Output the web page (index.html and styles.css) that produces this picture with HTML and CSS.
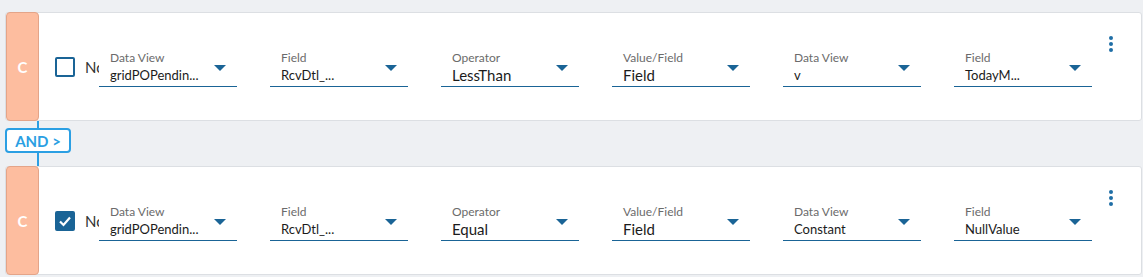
FILE: index.html
```html
<!DOCTYPE html>
<html lang="en">
<head>
    <meta charset="UTF-8">
    <title>Rule Builder</title>
    <link rel="stylesheet" href="styles.css">
</head>
<body>
    <div class="rule">
        <div class="rule-tag">C</div>
        <div class="rule-body">
            <span class="check"></span>
            <span class="not-label">Not</span>
            <div class="field"><span class="field-label">Data View</span><span class="field-value">gridPOPendin...</span><i class="caret"></i></div>
            <div class="field"><span class="field-label">Field</span><span class="field-value">RcvDtl_...</span><i class="caret"></i></div>
            <div class="field"><span class="field-label">Operator</span><span class="field-value big">LessThan</span><i class="caret"></i></div>
            <div class="field"><span class="field-label">Value/Field</span><span class="field-value big">Field</span><i class="caret"></i></div>
            <div class="field"><span class="field-label">Data View</span><span class="field-value">v</span><i class="caret"></i></div>
            <div class="field"><span class="field-label">Field</span><span class="field-value">TodayM...</span><i class="caret"></i></div>
        </div>
        <div class="menu"><b></b><b></b><b></b></div>
    </div>

    <div class="connector">
        <span class="line top"></span>
        <button class="and-btn">AND &gt;</button>
        <span class="line bottom"></span>
    </div>

    <div class="rule">
        <div class="rule-tag">C</div>
        <div class="rule-body">
            <span class="check checked">
                <svg width="14" height="12" viewBox="0 0 14 12"><path d="M2 6.5 L5.5 10 L12 2.5" fill="none" stroke="#fff" stroke-width="2.2"/></svg>
            </span>
            <span class="not-label">Not</span>
            <div class="field"><span class="field-label">Data View</span><span class="field-value">gridPOPendin...</span><i class="caret"></i></div>
            <div class="field"><span class="field-label">Field</span><span class="field-value">RcvDtl_...</span><i class="caret"></i></div>
            <div class="field"><span class="field-label">Operator</span><span class="field-value big">Equal</span><i class="caret"></i></div>
            <div class="field"><span class="field-label">Value/Field</span><span class="field-value big">Field</span><i class="caret"></i></div>
            <div class="field"><span class="field-label">Data View</span><span class="field-value">Constant</span><i class="caret"></i></div>
            <div class="field"><span class="field-label">Field</span><span class="field-value">NullValue</span><i class="caret"></i></div>
        </div>
        <div class="menu"><b></b><b></b><b></b></div>
    </div>
</body>
</html>
```

FILE: styles.css
```css
body {
    margin: 0;
    padding: 12px 2px 0 5px;
    background: #eef0f3;
    font-family: Lato, "Liberation Sans", sans-serif;
    color: #1b1b1b;
}
.rule {
    display: flex;
    box-sizing: border-box;
    width: 1137px;
    height: 109px;
    background: #fff;
    border: 1px solid #dcdfe3;
    border-radius: 3px;
}
.rule-tag {
    flex-shrink: 0;
    box-sizing: border-box;
    width: 33px;
    margin: -1px 0;
    background: #fdbd9f;
    border: 1px solid #e4a488;
    border-radius: 4px;
    color: #fff;
    font-weight: bold;
    font-size: 15px;
    display: flex;
    align-items: center;
    justify-content: center;
}
.rule-body {
    flex-shrink: 0;
    display: flex;
    align-items: center;
    padding-left: 16px;
}
.check {
    flex-shrink: 0;
    box-sizing: border-box;
    width: 20px;
    height: 20px;
    border: 2px solid #1a6496;
    border-radius: 2px;
    display: flex;
    align-items: center;
    justify-content: center;
}
.check.checked {
    background: #1a6496;
}
.not-label {
    flex-shrink: 0;
    width: 14px;
    margin-left: 10px;
    overflow: hidden;
    white-space: nowrap;
    font-size: 15px;
    color: #333;
}
.field {
    flex-shrink: 0;
    position: relative;
    box-sizing: border-box;
    width: 138px;
    margin-right: 33px;
    margin-top: 4px;
    padding-left: 11px;
    border-bottom: 1px solid #1a6496;
    display: flex;
    flex-direction: column;
}
.field:last-child {
    margin-right: 0;
}
.field-label {
    font-size: 12px;
    line-height: 14px;
    color: #6b6b6b;
}
.field-value {
    font-size: 13px;
    line-height: 21px;
    white-space: nowrap;
}
.field-value.big {
    font-size: 15px;
}
.caret {
    position: absolute;
    right: 11px;
    top: 14px;
    border-left: 6px solid transparent;
    border-right: 6px solid transparent;
    border-top: 6px solid #1a6496;
}
.menu {
    margin-left: auto;
    margin-right: 28px;
    padding-top: 23px;
    display: flex;
    flex-direction: column;
    gap: 2px;
}
.menu b {
    width: 4px;
    height: 4px;
    border-radius: 50%;
    background: #1f6ea6;
}
.connector {
    width: 66px;
    display: flex;
    flex-direction: column;
    align-items: center;
}
.line {
    width: 2px;
    background: #2b9fe3;
}
.line.top {
    height: 7px;
}
.line.bottom {
    height: 13px;
}
.and-btn {
    box-sizing: border-box;
    width: 66px;
    height: 25px;
    padding: 0;
    background: #fff;
    border: 2px solid #2b9fe3;
    border-radius: 4px;
    color: #2b9fe3;
    font-family: inherit;
    font-weight: bold;
    font-size: 15px;
}
```
